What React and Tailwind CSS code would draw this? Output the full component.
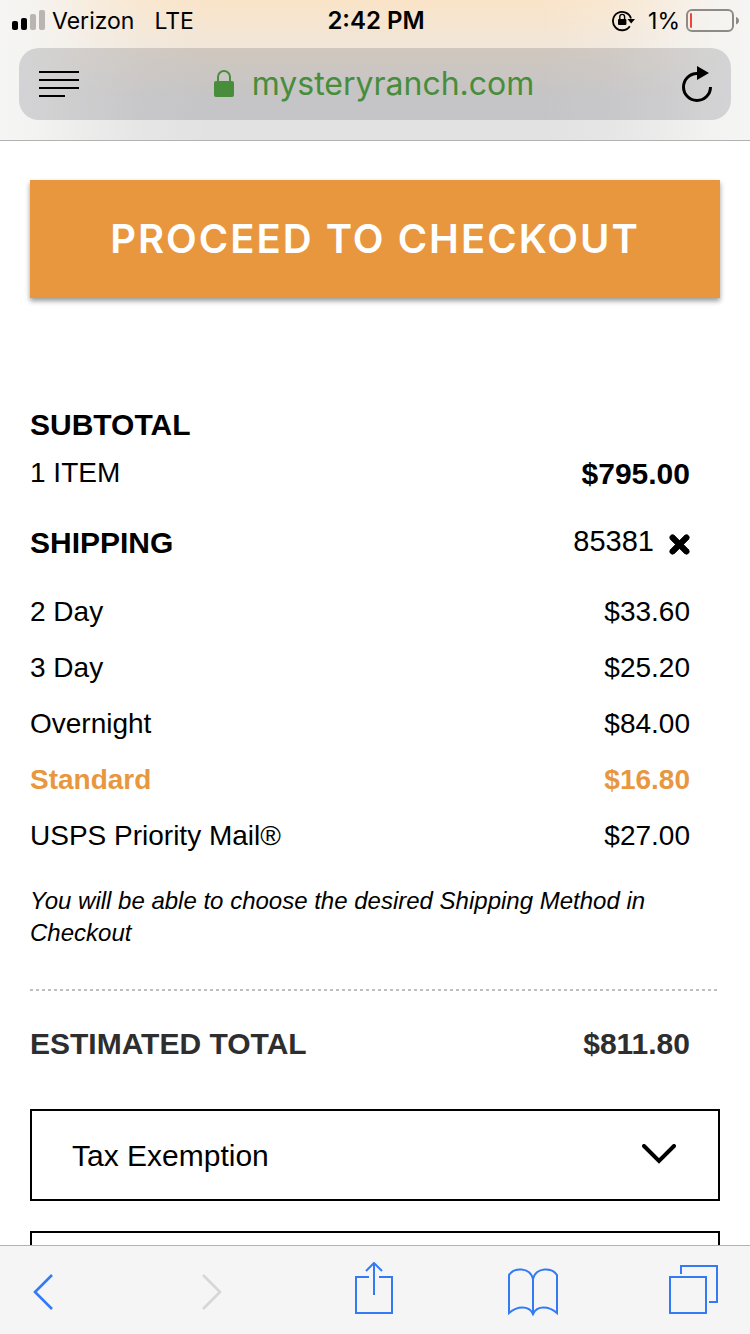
const shippingMethods = [
    { name: "2 Day", price: "$33.60" },
    { name: "3 Day", price: "$25.20" },
    { name: "Overnight", price: "$84.00" },
    { name: "Standard", price: "$16.80", selected: true },
    { name: "USPS Priority Mail®", price: "$27.00" },
];

function StatusBar() {
    return (
        <div className="grid grid-cols-3 items-center h-12 pl-3 pr-[10px] pb-[6px] text-[23px] text-black">
            <div className="flex items-center">
                <svg width="34" height="22" viewBox="0 0 34 22" aria-label="Signal">
                    <rect x="0" y="11" width="6" height="9" rx="2" />
                    <rect x="9" y="8" width="6" height="12" rx="2" />
                    <rect x="18" y="4" width="6" height="16" rx="2" fill="#b9b5b0" />
                    <rect x="27" y="0" width="6" height="20" rx="2" fill="#b9b5b0" />
                </svg>
                <span className="ml-[6px]">Verizon</span>
                <span className="ml-5">LTE</span>
            </div>
            <div className="text-center text-2xl font-semibold">2:42 PM</div>
            <div className="flex items-center justify-end">
                {/* Rotation lock */}
                <svg width="24" height="22" viewBox="0 0 24 22" fill="none" stroke="black" aria-label="Rotation lock">
                    <path d="M17.800 16.200A9.200 9.200 0 1 1 19 8.500" strokeWidth="1.8" />
                    <path d="M15.500 9H23L19.200 13.500Z" fill="black" stroke="none" />
                    <rect x="6" y="9" width="8.4" height="6" rx="1" fill="black" stroke="none" />
                    <path d="M7.800 9.500V6.800a2.400 2.400 0 0 1 4.800 0V9.500" strokeWidth="1.4" />
                </svg>
                <span className="ml-3">1%</span>
                {/* Battery */}
                <svg className="ml-[6px]" width="54" height="24" viewBox="0 0 54 24" fill="none" aria-label="Battery">
                    <rect x="1" y="1" width="46" height="21" rx="5" stroke="#8e8b87" strokeWidth="2" />
                    <rect x="4" y="4" width="2" height="15" rx="1" fill="#f04438" />
                    <path d="M50 8q3 1 3 3.700t-3 3.700z" fill="#8e8b87" />
                </svg>
            </div>
        </div>
    );
}

function AddressBar() {
    return (
        <div className="mx-[19px] flex items-center justify-between h-[72px] rounded-[20px] bg-[#1e1e28]/15 pr-[18px] pl-5">
            <button type="button" aria-label="Reader view">
                <svg width="40" height="28" viewBox="0 0 40 28">
                    <path d="M0 2H40M0 10H40M0 18H40M0 26H26" stroke="black" strokeWidth="2" />
                </svg>
            </button>
            <button type="button" className="flex items-center pr-3 text-[32px] leading-10 text-[#478d3c]">
                <svg width="20" height="28" viewBox="0 0 20 28" fill="none">
                    <rect x="0" y="11" width="20" height="16" rx="2" fill="#478d3c" />
                    <path d="M4 12V7a6 6 0 0 1 12 0V12" stroke="#478d3c" strokeWidth="2" />
                </svg>
                <span className="ml-[18px]">mysteryranch.com</span>
            </button>
            <button type="button" aria-label="Reload">
                <svg width="32" height="36" viewBox="0 0 32 36" fill="none">
                    <path d="M16 7.500A13.500 13.500 0 1 0 29.500 21" stroke="black" strokeWidth="3" />
                    <path d="M16 0L28 7L16 14Z" fill="black" />
                </svg>
            </button>
        </div>
    );
}

function Toolbar() {
    return (
        <nav className="flex h-[89px] shrink-0 items-center justify-between border-t border-[#b2b2b2] bg-[#f5f5f5] pr-[31px] pl-[18px] text-[#337bf6]">
            <button type="button" aria-label="Back" className="w-14">
                <svg width="50" height="56" viewBox="0 0 50 56" fill="none" stroke="currentColor" strokeWidth="2.6">
                    <path d="M34 13L17 30L34 47" />
                </svg>
            </button>
            <button type="button" aria-label="Forward" disabled className="text-[#d6d6d6]">
                <svg width="50" height="56" viewBox="0 0 50 56" fill="none" stroke="currentColor" strokeWidth="2.6">
                    <path d="M18 13L35 30L18 47" />
                </svg>
            </button>
            <button type="button" aria-label="Share">
                <svg width="50" height="56" viewBox="0 0 50 56" fill="none" stroke="currentColor" strokeWidth="2">
                    <path d="M23 15H10V51H46V15H33" />
                    <path d="M28 33V1M20 9L28 1L36 9" />
                </svg>
            </button>
            <button type="button" aria-label="Bookmarks">
                <svg width="52" height="56" viewBox="0 0 52 56" fill="none" stroke="currentColor" strokeWidth="2">
                    <path d="M27 17C24 5 8 5 3 13V51C11 44 23 43 27 52C31 43 43 44 51 51V13C46 5 30 5 27 17V53" />
                </svg>
            </button>
            <button type="button" aria-label="Tabs">
                <svg width="50" height="56" viewBox="0 0 50 56" fill="none" stroke="currentColor" strokeWidth="2">
                    <rect x="1" y="15" width="36" height="36" />
                    <path d="M12 12V4H48V40H40" />
                </svg>
            </button>
        </nav>
    );
}

export default function App() {
    return (
        <div className="flex h-screen flex-col overflow-hidden bg-white font-['Liberation_Sans',Arial,sans-serif] text-[28px] text-black">
            {/* Browser chrome */}
            <header className="shrink-0 border-b border-[#b2b2b2] bg-[linear-gradient(90deg,#f5f5f4_0%,#f5f5f4e0_5%,#f5f5f480_12%,#f5f5f430_19%,#f5f5f400_28%,#f5f5f400_72%,#f5f5f430_81%,#f5f5f480_88%,#f5f5f4e0_95%,#f5f5f4_100%),linear-gradient(180deg,#fae4c8_0%,#f1e6d8_32%,#e3e2e2_70%,#e2e2e2_100%)] pb-5 font-[Inter,sans-serif]">
                <StatusBar />
                <AddressBar />
            </header>

            <main className="min-h-0 flex-1 overflow-hidden px-[30px] pt-[39px]">
                <button type="button" className="h-[118px] w-full bg-[#e8973e] font-[Inter,sans-serif] text-[40px] font-semibold tracking-wider text-white shadow-[0_3px_5px_rgba(0,0,0,0.4)]">
                    PROCEED TO CHECKOUT
                </button>

                <section className="mt-[111px] pr-[30px]">
                    <h2 className="text-[30px] leading-8 font-bold">SUBTOTAL</h2>
                    <div className="mt-2 flex h-12 items-center justify-between">
                        <span>1 ITEM</span>
                        <span className="text-[30px] font-bold">$795.00</span>
                    </div>

                    <div className="mt-[21px] flex h-12 items-center justify-between">
                        <h2 className="text-[30px] font-bold">SHIPPING</h2>
                        <div className="flex items-center">
                            <span className="text-[29px]">85381</span>
                            <button type="button" aria-label="Remove zip code" className="ml-[14px] pt-1">
                                <svg width="22" height="22" viewBox="0 0 22 22">
                                    <path d="M4 4L19 19M19 4L4 19" stroke="black" strokeWidth="6" />
                                    <path d="M4.500 4.500L18.500 18.500M18.500 4.500L4.500 18.500" stroke="black" strokeWidth="6" strokeLinecap="round" />
                                </svg>
                            </button>
                        </div>
                    </div>

                    <ul className="mt-[18px]">
                        {shippingMethods.map((method) => (
                            <li
                                key={method.name}
                                className={`flex h-14 items-center justify-between ${method.selected ? "font-bold text-[#e8973e]" : ""}`}
                            >
                                <span>{method.name}</span>
                                <span>{method.price}</span>
                            </li>
                        ))}
                    </ul>
                    <p className="mt-[21px] text-2xl leading-8 italic">
                        You will be able to choose the desired Shipping Method in Checkout
                    </p>
                </section>

                <hr className="mt-10 h-[2px] border-0 bg-[repeating-linear-gradient(90deg,#bfbfbf_0_3px,transparent_3px_6px)]" />

                <div className="mt-7 mb-[42px] flex h-12 items-center justify-between pr-[30px] text-[30px] font-bold text-[#2e2e2e]">
                    <h2>ESTIMATED TOTAL</h2>
                    <span>$811.80</span>
                </div>

                <button type="button" aria-expanded="false" className="flex h-[92px] w-full items-center justify-between border-2 border-black pr-[42px] pl-10 text-[30px]">
                    <span>Tax Exemption</span>
                    <svg width="34" height="22" viewBox="0 0 34 22" fill="none">
                        <path d="M2 2L17 17L32 2" stroke="black" strokeWidth="4" strokeLinecap="round" />
                    </svg>
                </button>
                <button type="button" aria-label="More options" className="mt-[30px] block h-[92px] w-full border-2 border-black" />
            </main>

            <Toolbar />
        </div>
    );
}
